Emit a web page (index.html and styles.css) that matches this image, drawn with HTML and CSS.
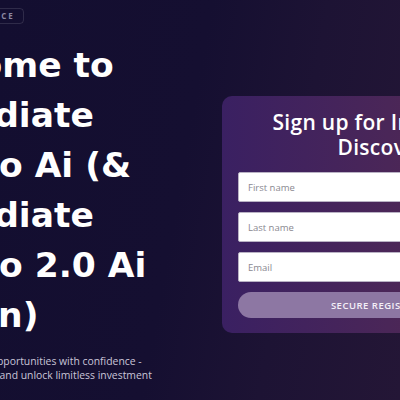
FILE: index.html
```html
<!DOCTYPE html>
<html>
<head>
<meta charset="utf-8">
<link rel="stylesheet" href="styles.css">
</head>
<body>
<div class="page">
  <section class="hero">
    <span class="badge">RELIABLE AI SERVICE</span>
    <h1 class="title">Welcome to<br>Immediate<br>Avapro Ai (&amp;<br>Immediate<br>Avapro 2.0 Ai<br>Edition)</h1>
    <p class="lead">Discover new trading opportunities with confidence -<br>Explore global markets and unlock limitless investment</p>
  </section>
  <section class="card">
    <h2 class="card-title">Sign up for Immediate<br>Discovery</h2>
    <form class="form">
      <input class="field" type="text" placeholder="First name">
      <input class="field" type="text" placeholder="Last name">
      <input class="field" type="email" placeholder="Email">
      <button class="submit" type="button">SECURE REGISTRATION</button>
    </form>
  </section>
</div>
</body>
</html>
```
FILE: styles.css
```css
html, body {
  margin: 0;
  padding: 0;
  width: 400px;
  height: 400px;
  overflow: hidden;
}
body {
  background: linear-gradient(100deg, #130e30 0%, #150f31 45%, #1d1334 70%, #241636 100%);
  font-family: "Open Sans", "DejaVu Sans", sans-serif;
  color: #fff;
}
.page {
  display: flex;
  align-items: flex-start;
  margin-left: -114px;
}
.hero {
  width: 336px;
  flex: none;
  display: flex;
  flex-direction: column;
  align-items: flex-start;
  padding-top: 8px;
}
.badge {
  display: block;
  border: 1px solid rgba(255,255,255,0.12);
  border-radius: 4px;
  padding: 3px 8px 3px 9px;
  font-size: 8px;
  font-weight: 700;
  letter-spacing: 2px;
  color: #8b88a2;
  line-height: 8px;
}
.title {
  margin: 16px 0 0;
  font-family: "DejaVu Sans", sans-serif;
  font-size: 34.5px;
  line-height: 50px;
  font-weight: 700;
  color: #fff;
}
.lead {
  margin: 14px 0 0;
  font-size: 10.4px;
  line-height: 14px;
  color: #c9c5d8;
}
.card {
  flex: none;
  width: 332px;
  margin-top: 96px;
  box-sizing: border-box;
  padding: 14px 16px 15px;
  border-radius: 10px;
  background: linear-gradient(90deg, #3a2062 0%, #4a2658 50%, #5c2a4a 100%);
}
.card-title {
  margin: 0;
  text-align: center;
  font-size: 21px;
  line-height: 25px;
  font-weight: 600;
  letter-spacing: 0.3px;
  color: #fff;
}
.form {
  display: flex;
  flex-direction: column;
  gap: 10px;
  margin-top: 12px;
}
.field {
  height: 30px;
  box-sizing: border-box;
  border: 1px solid #b9b2c4;
  border-radius: 2px;
  background: #fff;
  padding: 0 9px;
  font-family: inherit;
  font-size: 9.5px;
  color: #333;
}
.field::placeholder {
  color: #8a8890;
}
.submit {
  height: 26px;
  border: none;
  border-radius: 13px;
  background: #8d77a3;
  color: #f4f0f8;
  font-family: inherit;
  font-size: 9.5px;
  font-weight: 600;
  letter-spacing: 0.5px;
}
```
